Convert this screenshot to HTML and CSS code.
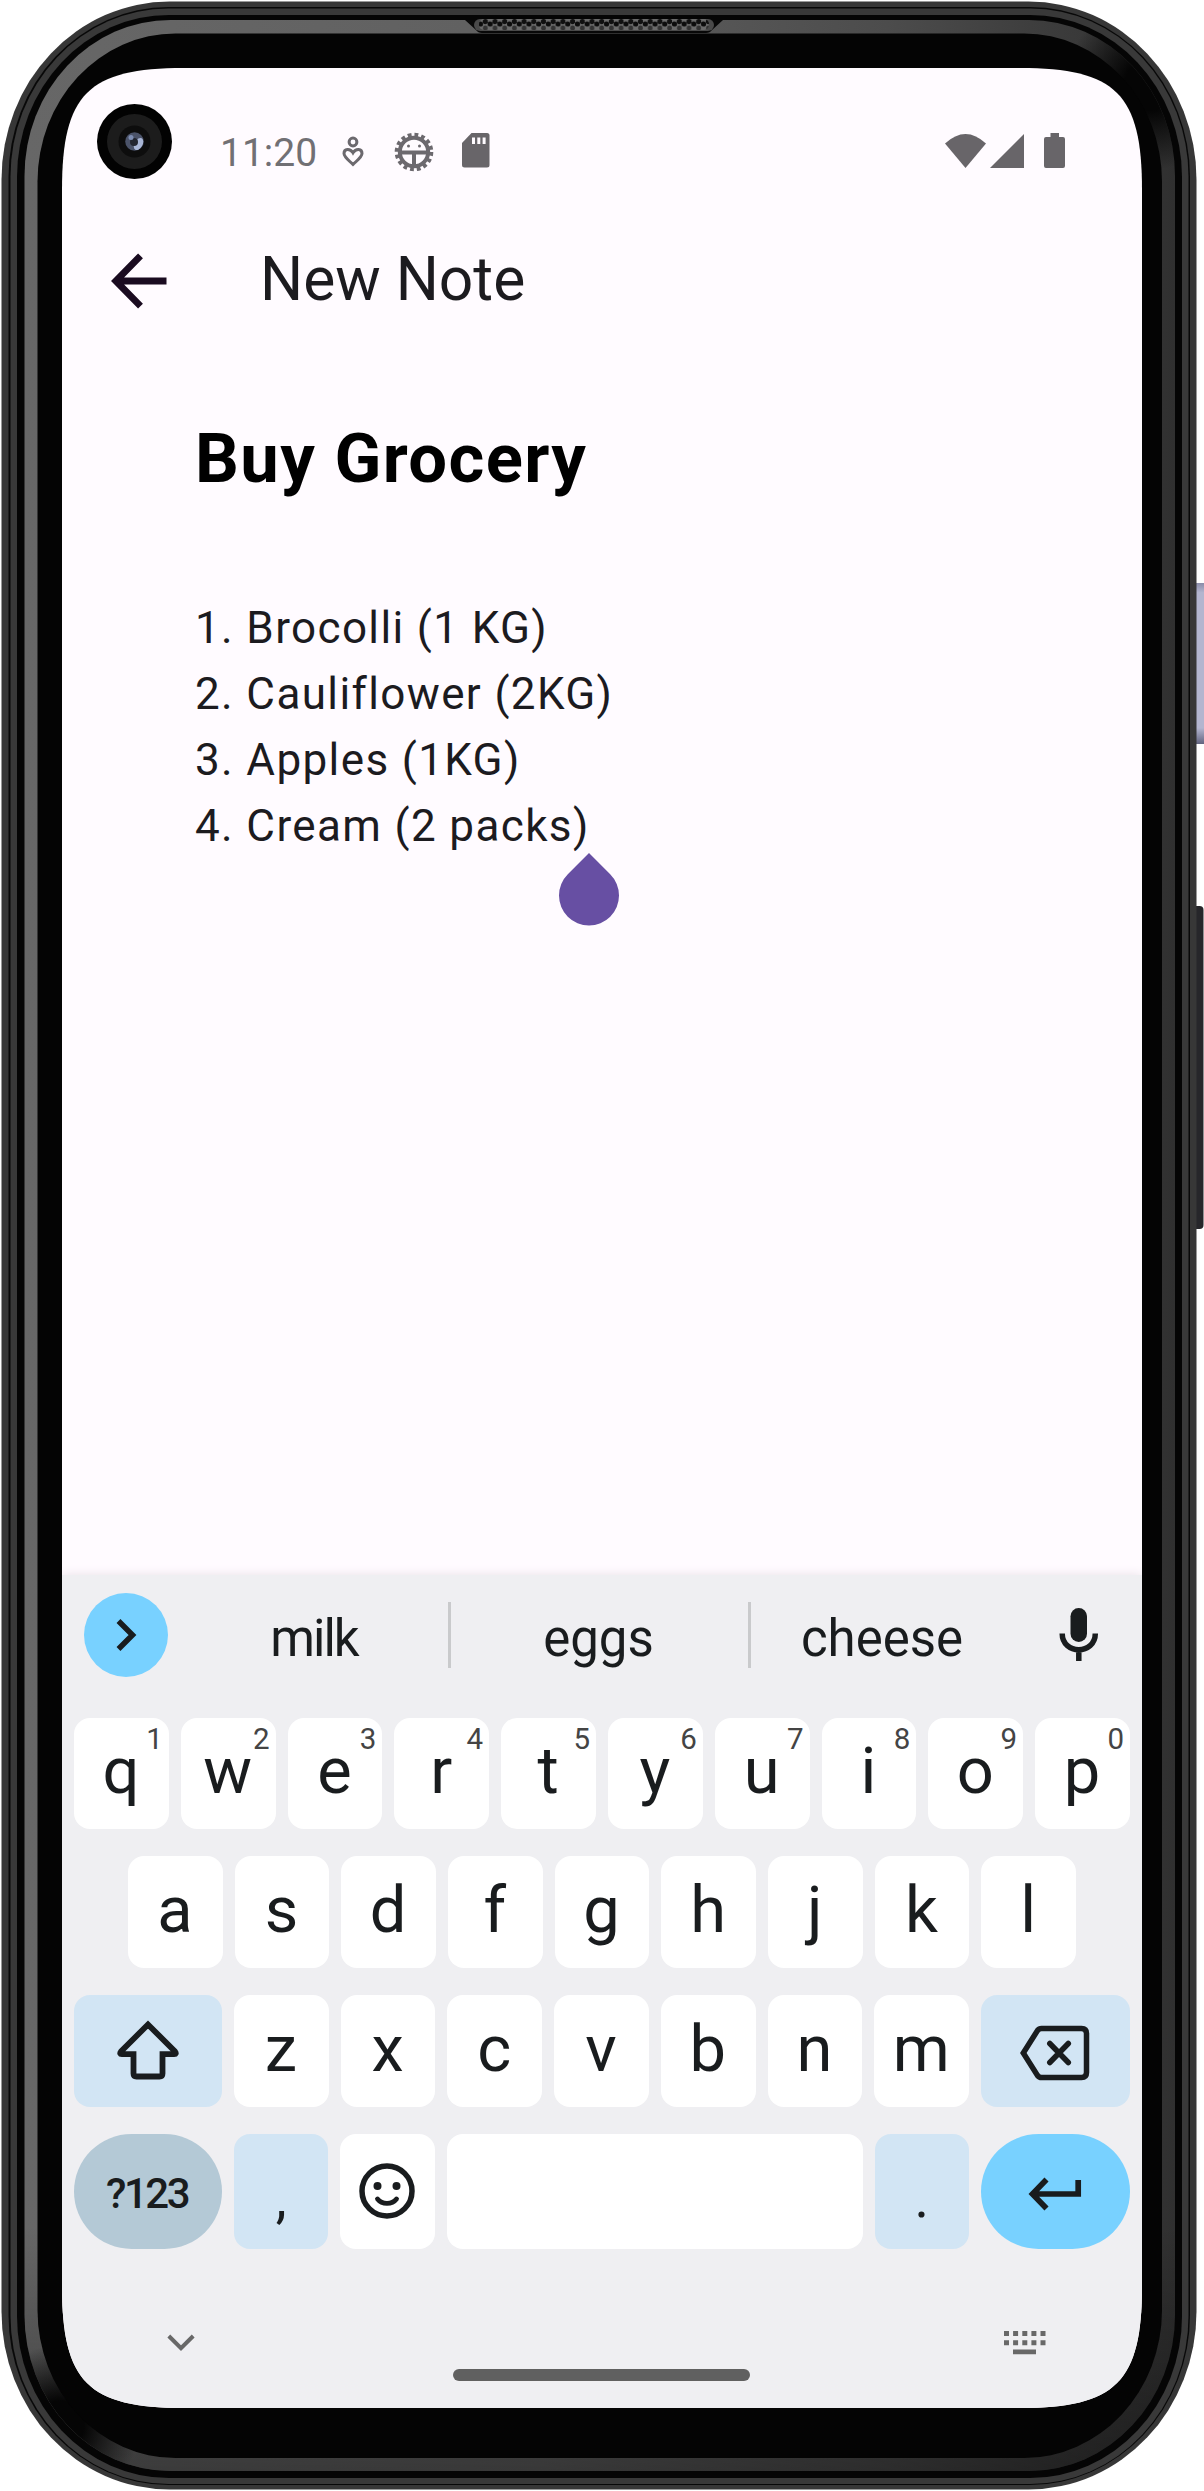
FILE: index.html
```html
<!DOCTYPE html>
<html lang="en">
<head>
<meta charset="utf-8">
<title>New Note</title>
<link rel="stylesheet" href="styles.css">
</head>
<body>
<div class="phone">
  <svg class="frame" width="1204" height="2491" viewBox="0 0 1204 2491" aria-hidden="true">
    <defs>
      <linearGradient id="rim" x1="0" y1="0" x2="1" y2="0">
        <stop offset="0" stop-color="#676767"/><stop offset=".45" stop-color="#606060"/><stop offset=".75" stop-color="#4c4c4c"/><stop offset="1" stop-color="#303030"/>
      </linearGradient>
      <linearGradient id="low" x1="0" y1="0" x2="0" y2="1">
        <stop offset=".9" stop-color="#000" stop-opacity="0"/><stop offset="1" stop-color="#000" stop-opacity=".42"/>
      </linearGradient>
      <radialGradient id="shade"><stop offset=".3" stop-color="#050505"/><stop offset="1" stop-color="#050505" stop-opacity="0"/></radialGradient>
      <linearGradient id="power" x1="0" y1="0" x2="0" y2="1"><stop offset="0" stop-color="#8a8ca8"/><stop offset=".06" stop-color="#b3b5cf"/><stop offset=".9" stop-color="#b3b5cf"/><stop offset="1" stop-color="#62647f"/></linearGradient>
      <clipPath id="rimclip"><rect x="24.500" y="20" width="1150.500" height="2451" rx="146" ry="156"/></clipPath>
      <pattern id="mesh" width="9.7" height="11" patternUnits="userSpaceOnUse" x="478" y="19">
        <rect width="9.7" height="11" fill="#6a6a6a"/>
        <circle cx="2.4" cy="5" r="2.6" fill="#0c0c0c"/><circle cx="7.3" cy="2.6" r="2.6" fill="#101010"/><circle cx="7.3" cy="9" r="2.4" fill="#333"/>
      </pattern>
    </defs>
    <rect x="1190" y="577" width="16" height="161" rx="3" fill="url(#power)" transform="translate(0 6)"/>
    <rect x="1190" y="906" width="13.500" height="323" rx="4" fill="#26262a"/>
    <rect x="1.500" y="1.500" width="1195" height="2488" rx="168" ry="178" fill="#373737"/>
    <rect x="8.500" y="7" width="1181.500" height="2478" rx="160" ry="170" fill="#080808"/>
    <rect x="10.500" y="8.500" width="1178" height="2475.500" rx="158" ry="168" fill="#393939"/>
    <rect x="17" y="15" width="1165" height="2463" rx="152" ry="162" fill="#050505"/>
    <g clip-path="url(#rimclip)">
      <rect x="24" y="20" width="1151" height="2451" fill="url(#rim)"/>
      <rect x="24" y="20" width="1151" height="2451" fill="url(#low)"/>
      <circle cx="1150" cy="85" r="85" fill="url(#shade)"/>
      <circle cx="60" cy="2425" r="80" fill="url(#shade)"/>
    </g>
    <rect x="37.500" y="33.500" width="1124.500" height="2424.500" rx="138" ry="148" fill="#040404"/>
    <path d="M465 20h258l-11 10q-2 3-6 3H482q-4 0-6-3z" fill="#080808"/>
    <rect x="474" y="19" width="240" height="12" rx="6" fill="#4a4a4a"/>
    <rect x="479" y="19" width="230" height="11" rx="5" fill="url(#mesh)"/>
  </svg>

  <main class="screen">
    <header class="status">
      <span class="clock">11:20</span>
      <svg class="heart" width="22" height="32" viewBox="0 0 22 32" fill="none" stroke="#6c696e" stroke-width="3"><circle cx="11" cy="6" r="3.900"/><path d="M11 28.500C7 24.500 2 21 2 17.500C2 12.500 8 12 11 16.800C14 12 20 12.500 20 17.500C20 21 15 24.500 11 28.500z"/></svg>
      <svg class="gear" width="40" height="40" viewBox="0 0 40 40" fill="none" stroke="#6c696e"><circle cx="20" cy="20" r="17.300" stroke-width="4" stroke-dasharray="3.800 2.990"/><circle cx="20" cy="20" r="14.200" stroke-width="4"/><path d="M6 20.500h28M20 21v13" stroke-width="4"/><circle cx="14.500" cy="14" r="1.500" fill="#6c696e" stroke="none"/><circle cx="25.500" cy="14" r="1.500" fill="#6c696e" stroke="none"/></svg>
      <svg class="sd" width="28" height="35" viewBox="0 0 28 35"><path d="M9.500 0H25q2.500 0 2.500 2.500V32q0 2.500-2.500 2.500H2.500Q0 34.500 0 32V10z" fill="#686569"/><path d="M10 4.500h3v6.500h-3zM15.300 4.500h3v6.500h-3zM20.600 4.500h3v6.500h-3z" fill="#fffbff"/></svg>
      <svg class="wifi" width="41" height="34" viewBox="0 0 41 34"><path d="M0 9.500Q20.500-9.500 41 9.500L20.500 34z" fill="#686569"/></svg>
      <svg class="signal" width="34" height="34" viewBox="0 0 34 34"><path d="M34 0v34H0z" fill="#686569"/></svg>
      <svg class="battery" width="21" height="35" viewBox="0 0 21 35"><path d="M6.500 0h8.500v4h4q2 0 2 2v27q0 2-2 2H2q-2 0-2-2V6q0-2 2-2h4.500z" fill="#686569"/></svg>
    </header>
    <svg class="camera" width="75" height="75" viewBox="0 0 75 75"><circle cx="37.500" cy="37.500" r="37.500" fill="#020202"/><circle cx="37.500" cy="37.500" r="27.500" fill="#1c1c1c"/><circle cx="37.500" cy="37.500" r="16" fill="#0d0d0d"/><circle cx="37.500" cy="37.500" r="9.300" fill="#4b5369"/><ellipse cx="41.500" cy="40" rx="4" ry="6.500" transform="rotate(30 41.500 40)" fill="#a9b6d6"/><circle cx="37" cy="38" r="4" fill="#22252f"/><circle cx="34" cy="33.500" r="2.500" fill="#7d8db2"/></svg>

    <div class="appbar">
      <svg width="56" height="56" viewBox="0 0 56 56" fill="none" stroke="#1a0b20" stroke-width="6.800"><path d="M29.500 2.800L4.800 28L29.500 53.200M4.800 28H55.500"/></svg>
      <span>New Note</span>
    </div>

    <article class="note">
      <h1>Buy Grocery</h1>
      <p>1. Brocolli (1 KG)<br>2. Cauliflower (2KG)<br>3. Apples (1KG)<br>4. Cream (2 packs)<span class="caret"><svg width="60" height="73" viewBox="0 0 60 73"><path d="M30 0L51.200 21.300A30 30 0 1 1 8.800 21.300z" fill="#674fa3"/></svg></span></p>
    </article>

    <section class="keyboard">
      <div class="suggestions">
        <span class="expand"><svg width="22" height="34" viewBox="0 0 22 34" fill="none" stroke="#191c1e" stroke-width="5.500"><path d="M2.500 3L16.500 17L2.500 31"/></svg></span>
        <span class="word milk">milk</span><i></i>
        <span class="word">eggs</span><i></i>
        <span class="word cheese">cheese</span>
        <svg width="40" height="54" viewBox="0 0 40 54"><rect x="11.500" y="0" width="16.500" height="34" rx="8.250" fill="#191c1e"/><path d="M3.200 25.500C3.200 47 36.300 47 36.300 25.500M19.800 41v12" fill="none" stroke="#191c1e" stroke-width="5.500"/></svg>
      </div>
      <div class="row first">
        <kbd>q<sup>1</sup></kbd><kbd>w<sup>2</sup></kbd><kbd>e<sup>3</sup></kbd><kbd>r<sup>4</sup></kbd><kbd>t<sup>5</sup></kbd><kbd>y<sup>6</sup></kbd><kbd>u<sup>7</sup></kbd><kbd>i<sup>8</sup></kbd><kbd>o<sup>9</sup></kbd><kbd>p<sup>0</sup></kbd>
      </div>
      <div class="row second">
        <kbd>a</kbd><kbd>s</kbd><kbd>d</kbd><kbd>f</kbd><kbd>g</kbd><kbd>h</kbd><kbd>j</kbd><kbd>k</kbd><kbd>l</kbd>
      </div>
      <div class="row">
        <kbd class="wide soft shift"><svg width="62" height="60" viewBox="0 0 62 60" fill="none" stroke="#191c1e" stroke-width="5.800"><path d="M31 4.500L4 31.500Q2 34 5 34.200H16.500V53.500Q16.500 56.500 19.500 56.500H42.500Q45.500 56.500 45.500 53.500V34.200H57Q60 34 58 31.500z"/></svg></kbd>
        <kbd>z</kbd><kbd>x</kbd><kbd>c</kbd><kbd>v</kbd><kbd>b</kbd><kbd>n</kbd><kbd>m</kbd>
        <kbd class="wide soft back"><svg width="70" height="56" viewBox="0 0 70 56" fill="none" stroke="#191c1e" stroke-width="5.500"><path d="M3.300 28L17.500 5.500Q19 3.500 21.500 3.500H61.500Q66.500 3.500 66.500 8.500V47.500Q66.500 52.500 61.500 52.500H21.500Q19 52.500 17.500 50.500z"/><path d="M29.800 18.500l18.500 19M48.300 18.500l-18.500 19" stroke-linecap="round"/></svg></kbd>
      </div>
      <div class="row last">
        <kbd class="wide mode">?123</kbd>
        <kbd class="soft punct">,</kbd>
        <kbd class="emoji"><svg width="56" height="56" viewBox="0 0 56 56"><circle cx="28" cy="28" r="25" fill="none" stroke="#191c1e" stroke-width="5.500"/><circle cx="18.500" cy="23" r="4" fill="#191c1e"/><circle cx="37.500" cy="23" r="4" fill="#191c1e"/><path d="M18.500 36C23 41.800 33 41.800 37.500 36" fill="none" stroke="#191c1e" stroke-width="4.800" stroke-linecap="round"/></svg></kbd>
        <kbd class="space"></kbd>
        <kbd class="soft punct">.</kbd>
        <kbd class="wide enter"><svg width="54" height="34" viewBox="0 0 54 34" fill="none" stroke="#191c1e" stroke-width="5.700"><path d="M18.500 2.500L4.500 17L18.500 31.500M4.500 17H50.200V3"/></svg></kbd>
      </div>
      <footer class="nav">
        <svg class="hide" width="28" height="18" viewBox="0 0 28 18" fill="none" stroke="#686868" stroke-width="4"><path d="M1.800 2L14 14.200L26.200 2"/></svg>
        <span class="home"></span>
        <svg class="switch" width="42" height="24" viewBox="0 0 42 24" fill="#686868"><path d="M0 0h5v5H0zM9.100 0h5v5h-5zM18.300 0h5v5h-5zM27.400 0h5v5h-5zM36.500 0h5v5h-5zM0 9.200h5v5H0zM9.100 9.200h5v5h-5zM18.300 9.200h5v5h-5zM27.400 9.200h5v5h-5zM36.500 9.200h5v5h-5zM9 18.500h23v4.800H9z"/></svg>
      </footer>
    </section>
  </main>
</div>
</body>
</html>
```
FILE: styles.css
```css
* { box-sizing: border-box; }
body { margin: 0; background: #fff; font-family: Roboto, "Liberation Sans", sans-serif; }
svg { display: block; flex: none; }
.phone { position: relative; width: 1204px; height: 2491px; padding: 68px 62px 83px; overflow: hidden; }
.frame { position: absolute; left: 0; top: 0; }
.screen {
  position: relative; width: 1080px; height: 2340px; display: flex; flex-direction: column; background: #fffbff;
  clip-path: path("M0 122C0 26 26 0 122 0H958C1054 0 1080 26 1080 122V2218C1080 2314 1054 2340 958 2340H122C26 2340 0 2314 0 2218Z");
}
.status { display: flex; align-items: center; height: 168px; padding: 0 77px 0 158px; color: #717074; }
.clock { width: 122px; font-size: 39px; line-height: 46px; margin-top: 2px; }
.heart { margin-right: 30px; }
.gear { margin-right: 28px; }
.wifi { margin-left: auto; margin-right: 4px; margin-top: -3px; }
.signal { margin-right: 20px; margin-top: -3px; }
.battery, .sd { margin-top: -3px; }
.camera { position: absolute; left: 35px; top: 36px; }
.appbar { display: flex; align-items: center; height: 88px; padding-left: 49px; gap: 93px; font-size: 60.5px; line-height: 72px; color: #1c1b1f; }
.appbar svg { margin-top: 2px; }
.note { flex: 1; padding: 95px 0 0 133px; }
.note h1 { margin: 0 0 96px; font-size: 68.75px; line-height: 80px; font-weight: 700; letter-spacing: 1.375px; color: #000; }
.note p { margin: 0; font-size: 44px; line-height: 66px; letter-spacing: 1.375px; color: #1c1b1f; }
.caret { position: relative; display: inline-block; height: 66px; vertical-align: top; }
.caret svg { position: absolute; left: -31px; top: 60px; }
.keyboard { height: 833px; padding: 0 12px; background: #efeff2; box-shadow: 0 0 10px #e8e0e6; display: flex; flex-direction: column; }
.suggestions { display: flex; align-items: center; height: 120px; margin-bottom: 23px; padding: 0 31px 0 10px; font-size: 51px; line-height: 60px; color: #191c1e; }
.suggestions > svg { margin: 0 0 0 auto; }
.expand { width: 84px; height: 84px; padding-left: 2px; border-radius: 50%; background: #78d1ff; display: flex; align-items: center; justify-content: center; }
.word { width: 297px; text-align: center; padding: 7px 2px 0 0; }
.milk { width: 280px; padding-left: 14px; letter-spacing: -2px; }
.cheese { width: 264px; }
.suggestions i { width: 3px; height: 66px; background: #c9cacc; }
.row { display: flex; gap: 12px; height: 112px; margin-bottom: 27px; }
.row.first { height: 111px; }
.row.second { padding: 0 54px; }
.row.last { height: 115px; margin-bottom: 0; }
kbd { position: relative; flex: 1 1 0; display: flex; align-items: center; justify-content: center; padding: 0 1px 5px 0; border-radius: 16px; background: #fff; font-family: inherit; font-size: 65px; line-height: 76px; color: #191c1e; }
kbd sup { position: absolute; right: 6px; top: 2px; font-size: 29.5px; line-height: 38px; color: #444; }
.wide { flex: none; width: 148px; padding: 0; }
.soft { background: #d2e5f4; }
.shift { padding-bottom: 2px; }
.back { width: 149px; padding: 4px 1px 0 0; }
.mode { border-radius: 58px; background: #b4c9d6; font-size: 42px; font-weight: 500; letter-spacing: -2.5px; padding: 4px 2px 0 0; }
.punct { font-size: 55px; padding: 13px 0 0; }
.emoji { padding: 0 1px 1px 0; }
.punct, .emoji { flex: none; width: 94.4px; }
.enter { width: 149px; border-radius: 58px; background: #78d1ff; padding: 4px 2px 0 0; }
.nav { display: flex; align-items: flex-start; height: 159px; padding-left: 93px; }
.hide { margin-top: 85px; }
.home { width: 297px; height: 12px; margin: 120px 0 0 258px; border-radius: 6px; background: #606060; }
.switch { margin: 82px 0 0 254px; }
```
